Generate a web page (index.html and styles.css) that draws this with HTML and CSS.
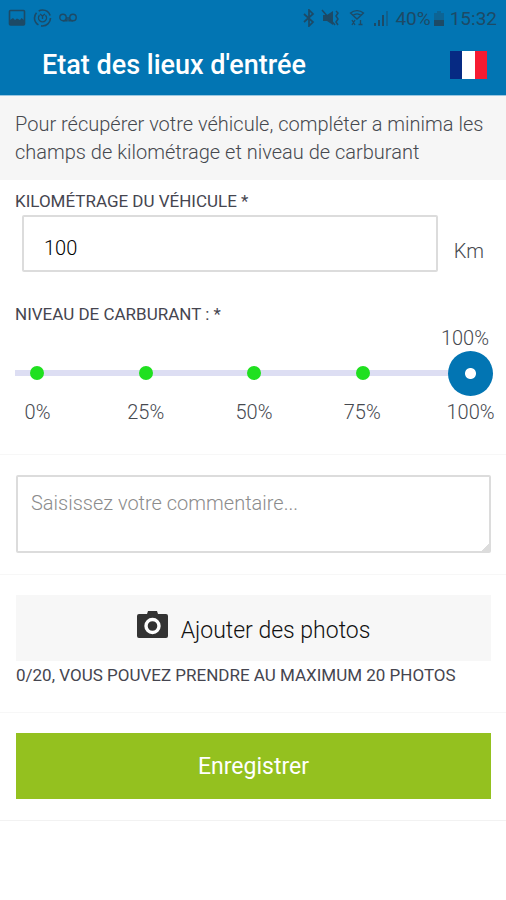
FILE: index.html
```html
<!DOCTYPE html>
<html lang="fr">
<head>
<meta charset="utf-8">
<meta name="viewport" content="width=device-width, initial-scale=1">
<title>Etat des lieux d'entrée</title>
<link rel="stylesheet" href="styles.css">
</head>
<body>
<header class="header">
  <div class="status">
    <div class="status-group status-left">
      <svg width="18" height="18" viewBox="0 0 18 18" aria-hidden="true"><rect x="1.5" y="1.5" width="15" height="14.5" rx="1" fill="none" stroke="currentColor" stroke-width="1.6"/><path d="M2 11l3-2 2 2 2-1.500 3 1.500 1.500-2L16 11v5H2z" fill="currentColor"/></svg>
      <svg width="19" height="18" viewBox="0 0 19 18" aria-hidden="true"><circle cx="9.500" cy="9" r="8" fill="none" stroke="currentColor" stroke-width="1.600" stroke-dasharray="14 2.750"/><path d="M6.500 6.200a4 4 0 1 0 6 0M7 5l2.500 2L12 5M9.500 7.500v2.500" fill="none" stroke="currentColor" stroke-width="1.400"/></svg>
      <svg width="18" height="18" viewBox="0 0 18 18" aria-hidden="true"><g fill="none" stroke="currentColor" stroke-width="1.400"><circle cx="4" cy="8.500" r="3.200"/><circle cx="14" cy="8.500" r="3.200"/><path d="M4 11.700h4V8M10 8v3.700h4"/></g></svg>
    </div>
    <div class="status-group">
      <svg width="12" height="18" viewBox="0 0 12 18" aria-hidden="true"><path d="M1 5l9 8-4 4V1l4 4-9 8" fill="none" stroke="currentColor" stroke-width="1.700"/></svg>
      <svg width="20" height="18" viewBox="0 0 20 18" aria-hidden="true"><path d="M2 6h4l6-4v14l-6-4H2z" fill="currentColor"/><path d="M1 1l13 15M15 2l2 2-2 3 2 3-2 3 2 3" fill="none" stroke="currentColor" stroke-width="1.500"/></svg>
      <svg class="wifi" width="16" height="18" viewBox="0 0 16 18" aria-hidden="true"><path d="M1.500 4a10 10 0 0 1 13 0L8 10zM4 6.500a6 6 0 0 1 8 0" fill="none" stroke="currentColor" stroke-width="1.300"/><path d="M3 11l3 5M6 11l-3 5M9.500 15.500h4M11.500 11v4" fill="none" stroke="currentColor" stroke-width="1.300"/></svg>
      <svg width="16" height="18" viewBox="0 0 16 18" aria-hidden="true"><path d="M1 14h2v3H1zM5 11h2v6H5zM9 6h2v11H9z" fill="currentColor"/><path d="M13 2h2v15h-2z" fill="currentColor" opacity=".45"/></svg>
      <span>40%</span>
      <svg class="battery" width="10" height="18" viewBox="0 0 10 18" aria-hidden="true"><path d="M3 2h4v2h3v7H0V4h3z" fill="currentColor" opacity=".4"/><path d="M0 11h10v6H0z" fill="currentColor"/></svg>
      <span>15:32</span>
    </div>
  </div>
  <div class="titlebar">
    <h1>Etat des lieux d'entrée</h1>
    <button class="lang" type="button" aria-label="Français">
      <svg width="37" height="28" viewBox="0 0 37 28" aria-hidden="true"><path fill="#062a83" d="M0 0h12v28H0z"/><path fill="#fff" d="M12 0h13v28H12z"/><path fill="#f61b31" d="M25 0h12v28H25z"/></svg>
    </button>
  </div>
</header>
<main>
  <p class="intro">Pour récupérer votre véhicule, compléter a minima les champs de kilométrage et niveau de carburant</p>
  <form>
    <section class="mileage">
      <label class="label" for="km">KILOMÉTRAGE DU VÉHICULE *</label>
      <div class="mileage-row">
        <input class="km" id="km" type="text" inputmode="numeric" value="100">
        <span class="unit">Km</span>
      </div>
    </section>
    <section class="fuel">
      <label class="label" for="fuel">NIVEAU DE CARBURANT : *</label>
      <output class="fuel-value" for="fuel">100%</output>
      <div class="slider">
        <div class="ticks"><i></i><i></i><i></i><i></i><i></i></div>
        <input id="fuel" type="range" min="0" max="100" step="25" value="100">
      </div>
      <div class="scale"><span>0%</span><span>25%</span><span>50%</span><span>75%</span><span>100%</span></div>
    </section>
    <section class="block">
      <textarea aria-label="Commentaire" placeholder="Saisissez votre commentaire..."></textarea>
    </section>
    <section class="block">
      <button class="button photos" type="button">
        <svg width="31" height="28" viewBox="0 0 31 28" aria-hidden="true"><path d="M2 3h8l1-3h9l1 3h8q2 0 2 2v20q0 2-2 2H2q-2 0-2-2V5q0-2 2-2z" fill="#333"/><circle cx="15.500" cy="15" r="6.500" fill="#333" stroke="#fff" stroke-width="3.400"/></svg>
        <span>Ajouter des photos</span>
      </button>
      <p class="label caption">0/20, VOUS POUVEZ PRENDRE AU MAXIMUM 20 PHOTOS</p>
    </section>
    <section class="block last">
      <button class="button save" type="submit">Enregistrer</button>
    </section>
  </form>
</main>
</body>
</html>
```
FILE: styles.css
```css
* {
  box-sizing: border-box;
}

body {
  margin: 0;
  background: #fff;
  color: #46494f;
  font-family: Roboto, "Liberation Sans", sans-serif;
  font-size: 20px;
  font-weight: 300;
}

input, textarea, button {
  font: inherit;
}

svg {
  display: block;
  flex: none;
}

.header {
  background: #0275b3;
  border-bottom: 1px solid #9bc7e1;
}

.status {
  display: flex;
  justify-content: space-between;
  align-items: center;
  height: 36px;
  padding: 0 9px 0 8px;
  color: #1d4a66;
  font-size: 19px;
  font-weight: 400;
}

.status-group {
  display: flex;
  align-items: center;
  gap: 6px;
}

.status-left {
  gap: 7px;
}

.wifi {
  margin: 0 2px;
}

.battery {
  margin-left: -3px;
}

.titlebar {
  display: flex;
  justify-content: space-between;
  align-items: center;
  height: 59px;
  padding: 0 19px 2px 42px;
}

h1 {
  margin: 0;
  color: #fff;
  font-size: 27px;
  font-weight: 500;
}

.lang {
  padding: 0;
  border: 0;
  background: none;
}

.intro {
  margin: 0;
  padding: 14px 15px;
  background: #f6f6f6;
  line-height: 28px;
}

.label {
  display: block;
  color: #45454f;
  font-size: 17px;
  font-weight: 400;
  line-height: 20px;
}

.mileage {
  padding: 11px 14px 0 15px;
}

.mileage-row {
  display: flex;
  align-items: center;
  gap: 16px;
  margin-top: 4px;
  padding: 0 8px 0 7px;
}

.km {
  flex: 1;
  min-width: 0;
  height: 57px;
  padding: 8px 20px 0;
  border: 2px solid #dcdcdc;
  border-radius: 2px;
  color: #000;
}

.unit {
  padding-top: 14px;
}

.fuel {
  display: flex;
  flex-direction: column;
  padding: 32px 13px 30px 15px;
}

.fuel-value {
  align-self: flex-end;
  padding-right: 4px;
  line-height: 24px;
  margin-top: 2px;
}

.slider {
  display: grid;
}

.ticks, .slider input {
  grid-area: 1 / 1;
}

.ticks {
  display: flex;
  justify-content: space-between;
  align-items: center;
  padding: 0 15px;
  background: linear-gradient(#dddef3, #dddef3) center / 100% 6px no-repeat;
}

.ticks i {
  width: 14px;
  height: 14px;
  border-radius: 50%;
  background: #20e020;
}

.slider input {
  appearance: none;
  width: 100%;
  height: 46px;
  margin: 0;
  background: none;
}

.slider input::-webkit-slider-thumb {
  appearance: none;
  width: 45px;
  height: 45px;
  border-radius: 50%;
  background: radial-gradient(circle, #fff 5px, #0275b3 6px);
}

.scale {
  display: flex;
  justify-content: space-between;
  margin-top: 4px;
  line-height: 24px;
}

.scale span {
  display: flex;
  justify-content: center;
  width: 45px;
}

.block {
  padding: 20px 15px 21px 16px;
  border-top: 1px solid #f7f7f7;
}

textarea {
  display: block;
  width: 100%;
  height: 78px;
  padding: 12px 13px;
  border: 2px solid #dcdcdc;
  border-radius: 2px;
  line-height: 28px;
}

textarea::placeholder {
  color: #8c8c8c;
}

textarea::-webkit-resizer {
  background: linear-gradient(135deg, transparent 75%, #dcdcdc 75%);
}

.button {
  display: flex;
  justify-content: center;
  align-items: center;
  gap: 13px;
  width: 100%;
  height: 66px;
  padding: 0;
  border: 0;
  font-size: 23px;
}

.photos {
  background: #f7f7f7;
  color: #111;
}

.photos svg {
  margin-bottom: 7px;
}

.photos span {
  padding-top: 4px;
}

.caption {
  margin: 4px 0 6px;
}

.save {
  background: #94c11f;
  color: #fff;
  font-weight: 400;
}

.last {
  border-bottom: 1px solid #f2f2f2;
}
```
